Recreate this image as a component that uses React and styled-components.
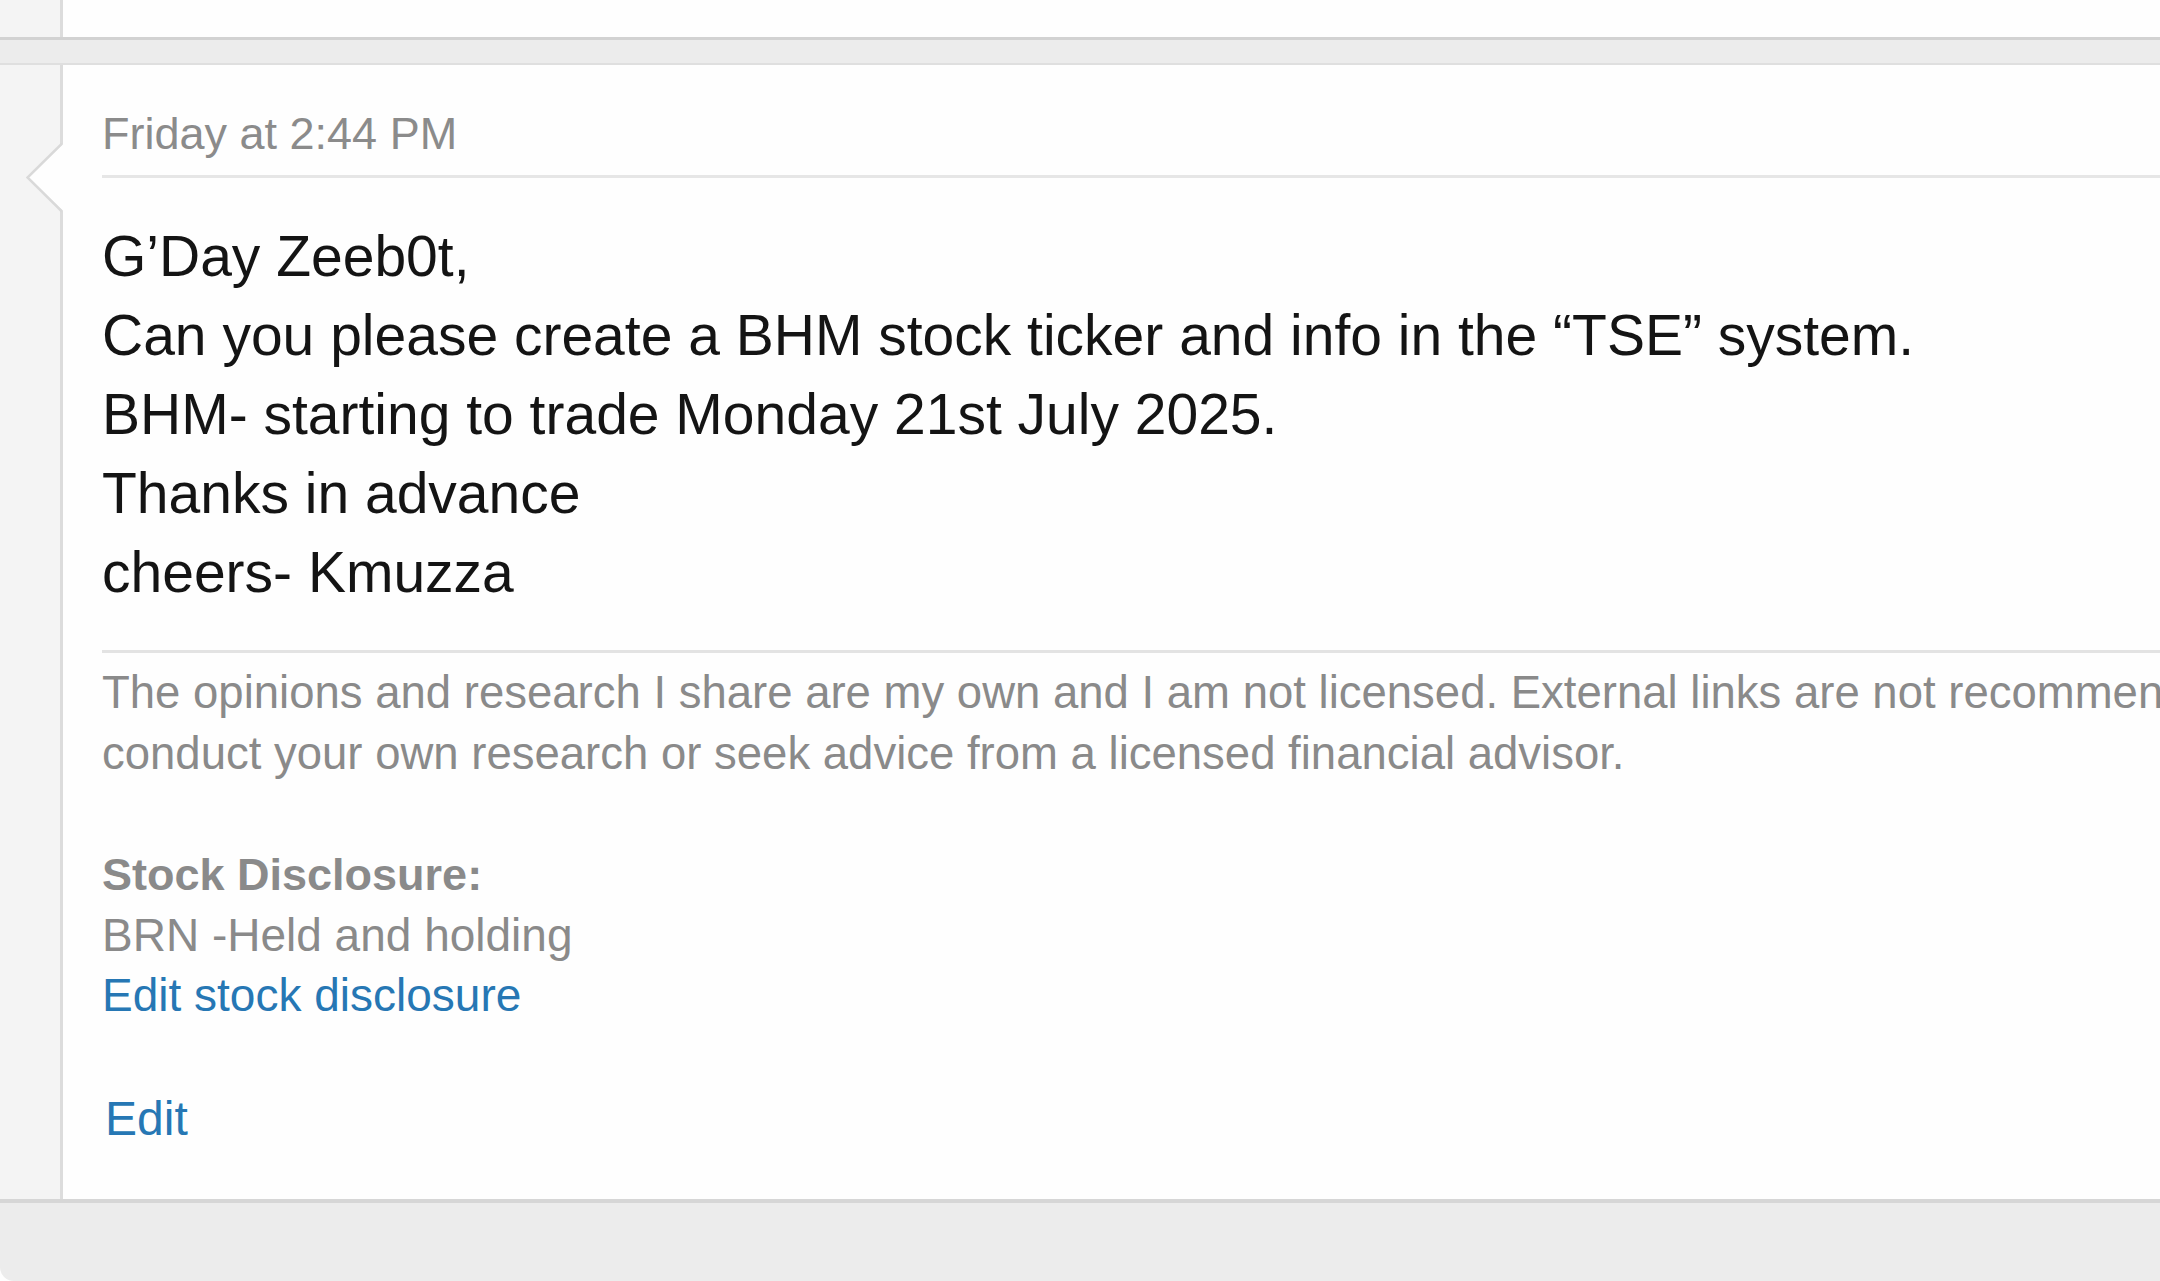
import React from 'react';
import styled, { createGlobalStyle } from 'styled-components';

const GlobalStyle = createGlobalStyle`
  html, body {
    margin: 0;
    padding: 0;
    background: #fefefe;
    overflow: hidden;
  }
  body {
    font-family: "Liberation Sans", Arial, Helvetica, sans-serif;
  }
`;

function App() {
  return (
    <>
      <GlobalStyle />
      <Page>
        <Row $height="37px">
          <Gutter />
          <Content />
        </Row>
        <Band />
        <MessageRow>
          <Gutter />
          <Notch width="38" height="70" viewBox="0 0 38 70">
            <polygon points="38,0 1,34.5 38,69" fill="#fefefe" />
            <polyline
              points="36,0.5 1.5,34.5 36,68.5"
              fill="none"
              stroke="#d9d9d9"
              strokeWidth="2.5"
            />
          </Notch>
          <Message>
            <Stamp>Friday at 2:44 PM</Stamp>
            <Body>
              <p>G’Day Zeeb0t,</p>
              <p>Can you please create a BHM stock ticker and info in the “TSE” system.</p>
              <p>BHM- starting to trade Monday 21st July 2025.</p>
              <p>Thanks in advance</p>
              <p>cheers- Kmuzza</p>
            </Body>
            <Signature>
              <Line>
                The opinions and research I share are my own and I am not licensed. External links are not recommendations. Always
              </Line>
              <Line>conduct your own research or seek advice from a licensed financial advisor.</Line>
            </Signature>
            <Disclosure>
              <strong>Stock Disclosure:</strong>
              <span>BRN -Held and holding</span>
              <LinkText href="#">Edit stock disclosure</LinkText>
            </Disclosure>
            <Actions>
              <LinkText href="#" $size="48px">Edit</LinkText>
            </Actions>
          </Message>
        </MessageRow>
        <Footer />
      </Page>
    </>
  );
}

const Page = styled.div`
  display: flex;
  flex-direction: column;
  width: 2160px;
  height: 1281px;
  overflow: hidden;
`;

const Row = styled.div`
  display: flex;
  height: ${(p) => p.$height};
  flex-shrink: 0;
`;

const Gutter = styled.div`
  width: 60px;
  flex-shrink: 0;
  background: #f4f4f4;
  border-right: 3px solid #dcdcdc;
`;

const Content = styled.div`
  flex: 1;
  background: #fefefe;
`;

const Band = styled.div`
  height: 23px;
  flex-shrink: 0;
  background: #ececec;
  border-top: 3px solid #d2d2d2;
  border-bottom: 2px solid #dfdfdf;
`;

const MessageRow = styled.div`
  position: relative;
  display: flex;
  height: 1134px;
  flex-shrink: 0;
`;

const Notch = styled.svg`
  position: absolute;
  left: 26px;
  top: 78px;
`;

const Message = styled.div`
  flex: 1;
  min-width: 0;
  background: #fefefe;
  padding: 42px 0 0 39px;
  white-space: nowrap;
`;

const Stamp = styled.div`
  font-size: 45px;
  line-height: 54px;
  color: #8b8b8b;
  padding-bottom: 14px;
  border-bottom: 3px solid #e6e6e6;
`;

const Body = styled.div`
  padding: 39px 0 38px;
  border-bottom: 3px solid #e3e3e3;
  font-size: 57px;
  line-height: 79px;
  color: #141414;

  p {
    margin: 0;
  }
`;

const Signature = styled.div`
  padding-top: 10px;
  font-size: 45.5px;
  line-height: 60.5px;
  color: #8a8a8a;
`;

const Line = styled.div``;

const Disclosure = styled.div`
  display: flex;
  flex-direction: column;
  align-items: flex-start;
  margin-top: 61px;
  font-size: 46px;
  line-height: 60px;
  color: #8a8a8a;

  strong {
    font-size: 45px;
    font-weight: 700;
  }
`;

const Actions = styled.div`
  margin-top: 64px;
  padding-left: 3px;
  line-height: 60px;
`;

const LinkText = styled.a`
  font-size: ${(p) => p.$size || 'inherit'};
  color: #2677b4;
  text-decoration: none;
`;

const Footer = styled.div`
  flex: 1;
  background: #ececec;
  border-top: 4px solid #d6d6d6;
  border-bottom-left-radius: 14px;
`;

export default App;
